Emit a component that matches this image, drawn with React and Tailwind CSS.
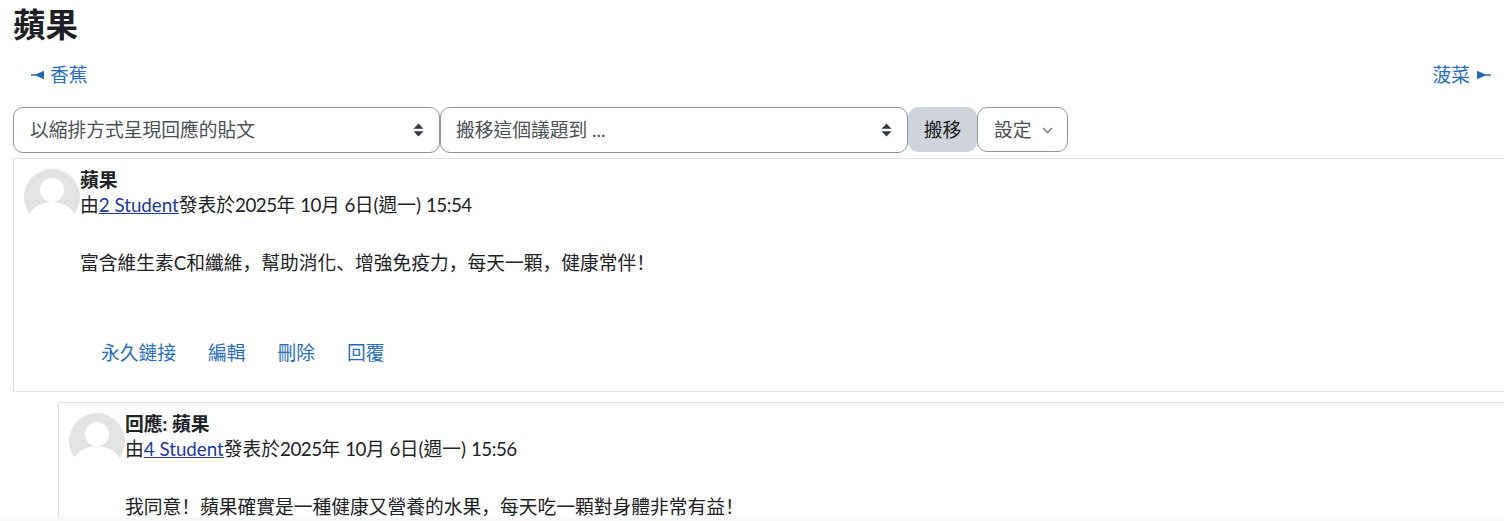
function P({ children }) {
  return <span style={{ fontFamily: '"Noto Sans CJK SC",sans-serif' }}>{children}</span>;
}
function N({ children }) {
  return <span className="tracking-[-0.5px]">{children}</span>;
}
function Updown() {
  return (
    <svg width="11" height="16" viewBox="0 0 11 16" className="shrink-0">
      <path d="M5.5 1.5 L10.5 6.8 H0.5 Z M5.5 14.5 L10.5 9.2 H0.5 Z" fill="#343a40" />
    </svg>
  );
}
function Sel({ w, pad, text }) {
  return (
    <div className={`${w} ${pad} h-[46px] border border-[#8f959e] rounded-[10px] bg-white pr-[15px] flex items-center justify-between text-[#495057]`}>
      <span>{text}</span>
      <Updown />
    </div>
  );
}
function Avatar() {
  return (
    <svg width="56" height="56" viewBox="0 0 56 56" className="shrink-0 block">
      <circle cx="28" cy="28" r="28" fill="#e3e3e3" />
      <circle cx="28" cy="21" r="12" fill="#ffffff" />
      <ellipse cx="28" cy="56" rx="26" ry="23" fill="#ffffff" />
    </svg>
  );
}
function Head({ title, user, time }) {
  return (
    <div className="flex">
      <Avatar />
      <div className="leading-[25px] -mt-[2px]">
        <div className="font-bold text-[#1d2125]">{title}</div>
        <div>由<a className="text-[#1a3a9c] underline">{user}</a>發表於<N>2025</N>年 <N>10</N>月 <N>6</N>日(週一) <N>{time}</N></div>
      </div>
    </div>
  );
}
function PinL() {
  return (
    <svg width="15" height="10" viewBox="0 0 15 10">
      <path d="M1 4.3 H6 L14 .8 V9.2 L6 5.7 H1 Z" fill="#2566b8" />
    </svg>
  );
}
function PinR() {
  return (
    <svg width="15" height="10" viewBox="0 0 15 10">
      <path d="M15 4.3 H9 L1 .8 V9.2 L9 5.7 H15 Z" fill="#2566b8" />
    </svg>
  );
}
export default function App() {
  return (
    <div
      className="w-[1504px] h-[521px] overflow-hidden bg-white text-[18.75px] text-[#1d2125]"
      style={{ fontFamily: 'Lato,"Noto Sans CJK TC",sans-serif' }}
    >
      <div className="h-[518px] overflow-hidden pl-[13px] pt-[6px]">
        <h2 className="text-[32.5px] font-bold leading-[38px]">蘋果</h2>
        <div className="flex justify-between items-center h-[40px] mt-[11px] pl-[17px] pr-[13px] text-[#2a6ebb]">
          <a className="flex items-center gap-[5px]"><PinL />香蕉</a>
          <a className="flex items-center gap-[6px]">菠菜<PinR /></a>
        </div>
        <div className="flex items-start mt-[12px]">
          <Sel w="w-[427px]" pad="pl-4" text="以縮排方式呈現回應的貼文" />
          <Sel w="w-[468px]" pad="pl-[15px]" text="搬移這個議題到 ..." />
          <div className="h-[45px] w-[69px] rounded-[10px] bg-[#ced4da] pt-[2px] flex items-center justify-center">搬移</div>
          <div className="h-[45px] w-[91px] border border-[#8f959e] rounded-[10px] pt-[2px] flex items-center pl-4 gap-[10px] text-[#495057]">
            設定
            <svg width="11" height="7" viewBox="0 0 11 7"><path d="M1 1l4.5 4.5L10 1" fill="none" stroke="#6a737b" strokeWidth="1.3" /></svg>
          </div>
        </div>
        <div className="mt-[5px] w-[1600px] h-[234px] border border-[#dee2e6] pt-[10px] pl-[10px]">
          <Head title="蘋果" user="2 Student" time="15:54" />
          <div className="pl-[56px] mt-[24px] leading-[25px]">富含維生素C和纖維<P>，</P>幫助消化<P>、</P>增強免疫力<P>，</P>每天一顆<P>，</P>健康常伴<P>！</P></div>
          <div className="flex gap-[32px] pl-[77px] mt-[65px] leading-[25px] text-[#2a6ebb]">
            <a>永久鏈接</a><a>編輯</a><a>刪除</a><a>回覆</a>
          </div>
        </div>
        <div className="mt-[10px] ml-[45px] w-[1600px] h-[200px] border border-[#dee2e6] pt-[10px] pl-[10px]">
          <Head title="回應: 蘋果" user="4 Student" time="15:56" />
          <div className="pl-[56px] mt-[24px] leading-[25px]">我同意<P>！</P>蘋果確實是一種健康又營養的水果<P>，</P>每天吃一顆對身體非常有益<P>！</P></div>
        </div>
      </div>
      <div className="h-[3px] bg-[#f8f9fa]"></div>
    </div>
  );
}
